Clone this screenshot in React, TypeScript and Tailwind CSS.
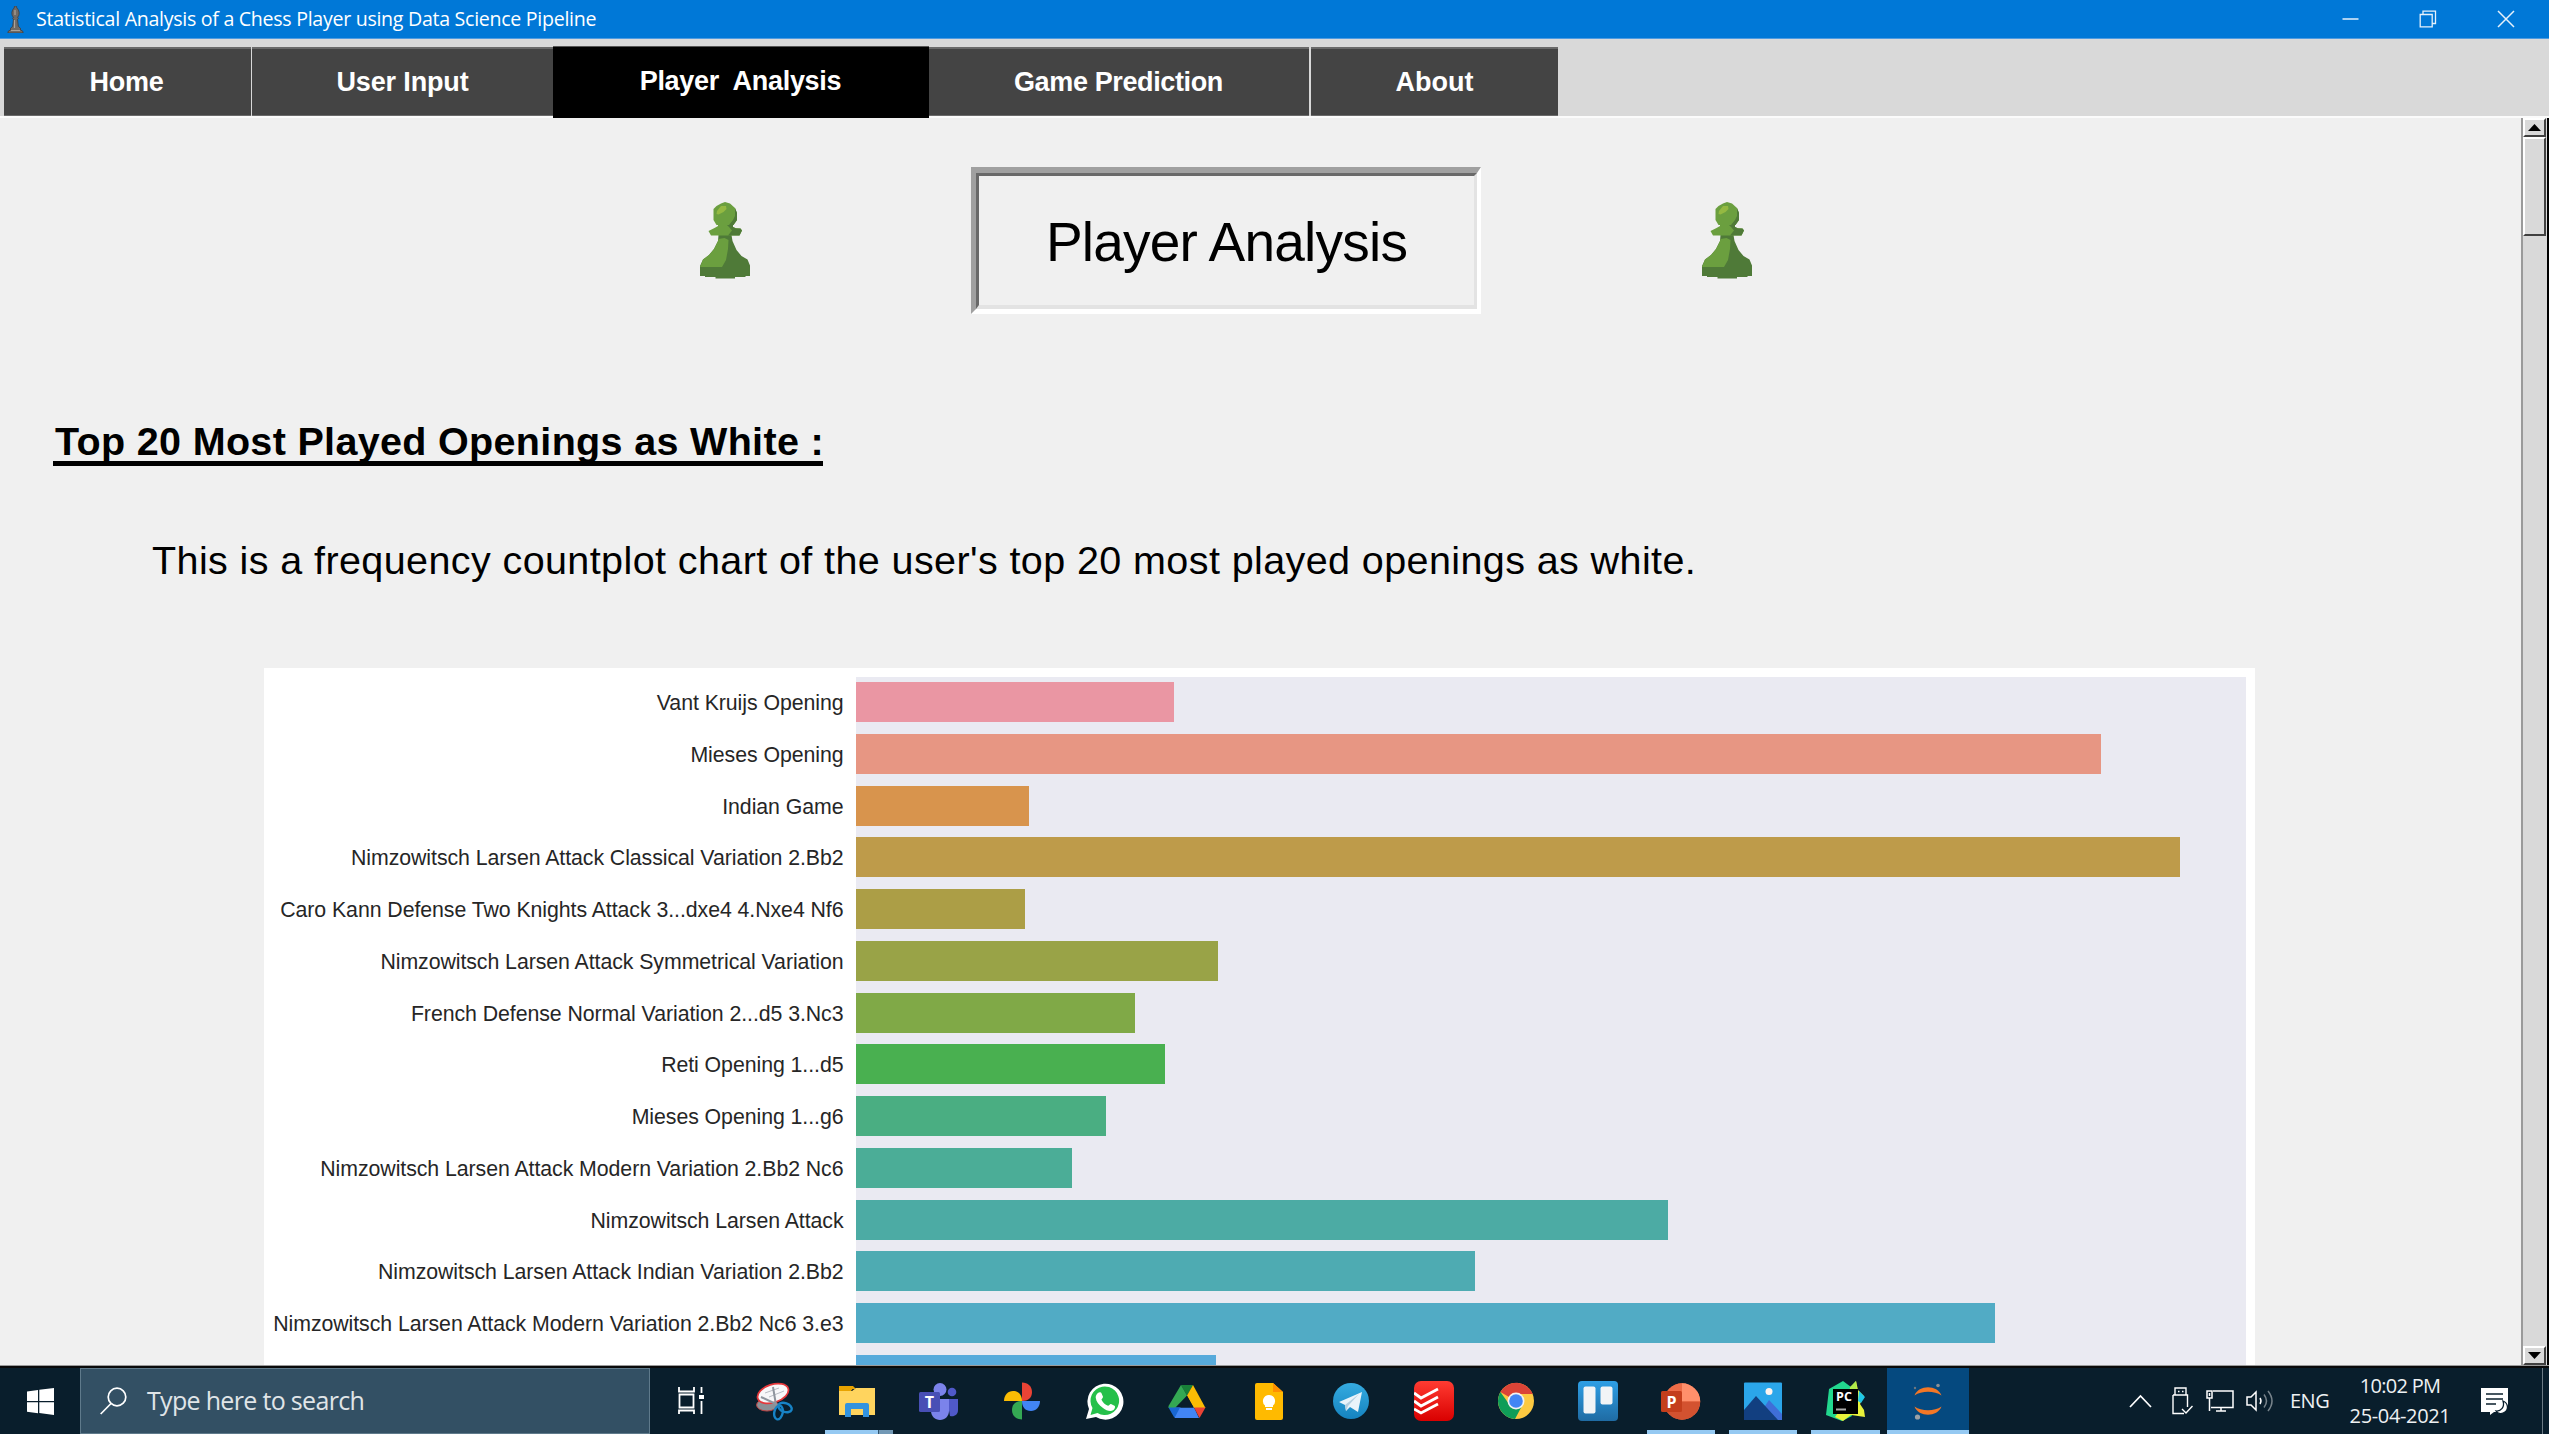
import { type ReactNode } from "react";

const ARIAL = "font-['Liberation_Sans',Arial,sans-serif]";
const UI = "font-['Open_Sans','Noto_Sans',sans-serif]";

const bars = [
  { label: "Vant Kruijs Opening", width: 318, color: "#ea96a3" },
  { label: "Mieses Opening", width: 1245, color: "#e79683" },
  { label: "Indian Game", width: 173, color: "#d8944d" },
  { label: "Nimzowitsch Larsen Attack Classical Variation 2.Bb2", width: 1324, color: "#be9b4a" },
  { label: "Caro Kann Defense Two Knights Attack 3...dxe4 4.Nxe4 Nf6", width: 169, color: "#ac9e46" },
  { label: "Nimzowitsch Larsen Attack Symmetrical Variation", width: 362, color: "#99a347" },
  { label: "French Defense Normal Variation 2...d5 3.Nc3", width: 279, color: "#80a947" },
  { label: "Reti Opening 1...d5", width: 309, color: "#49b050" },
  { label: "Mieses Opening 1...g6", width: 250, color: "#4aae82" },
  { label: "Nimzowitsch Larsen Attack Modern Variation 2.Bb2 Nc6", width: 216, color: "#4bad97" },
  { label: "Nimzowitsch Larsen Attack", width: 812, color: "#4caba4" },
  { label: "Nimzowitsch Larsen Attack Indian Variation 2.Bb2", width: 619, color: "#4eabb2" },
  { label: "Nimzowitsch Larsen Attack Modern Variation 2.Bb2 Nc6 3.e3", width: 1139, color: "#51abc5" },
  { label: "", width: 360, color: "#57aadb" },
];

function Bishop() {
  return (
    <svg className="h-[27px] w-[19px]" viewBox="0 0 19 27">
      <path d="M9.500 0c1 0 1.500.8 1.200 1.800C12.500 3.500 13.500 6 13 8.500c-.3 1.500-1 2.200-1.500 2.800l1 1-1 1 .8 7 2.200 2v1.500l2.500 1.700V27H2v-1.500L4.500 23.800v-1.500l2.200-2 .8-7-1-1 1-1C7 10.700 6.300 10 6 8.500 5.500 6 6.500 3.500 8.300 1.800 8 .8 8.500 0 9.500 0Z" fill="#6e6a66" stroke="#3d3a3a" strokeWidth=".8" />
      <path d="M9 4v5M8.500 14v8M5 24.500h9" stroke="#aaa39b" strokeWidth="1.200" />
    </svg>
  );
}

function Pawn() {
  return (
    <svg className="h-[77px] w-[51px]" viewBox="0 0 51 77">
      <path d="M18.500 33h13l1 6 4 9 5 6 6 3.500 2.500 6V74h-4.500v1H35v1.500H15.500V75H5v-1H0V64l3-6.500L9 53l5-6 4-8Z" fill="#4f7a38" />
      <path d="M18.500 37l6-1 4 2-.5 9-2 11-4 7H0l3-7.500L9 53l5-6 4-8Z" fill="#6b9f3f" />
      <path d="M21 1.500l4-1.500 5 1.500 5 4.500 2 5v7l-3.500 5h-17L13.500 18V7l3-3Z" fill="#6b9f3f" />
      <path d="M18 22h14v2.500l3.500 1.500 5 .5 1.500 2-2.500 5H11l-2.500-4.500 6-3 3.500-2Z" fill="#6b9f3f" />
      <path d="M35 6l2 5v7l-3.500 5h-4.500l4-5 2-4Z" fill="#4f7a38" />
      <path d="M27 23h6v2l3 1.500h4.500l1.500 2-2.500 5H28l4-5-3-3.500Z" fill="#4f7a38" />
      <path d="M17 9l4-5h5l.5 3-3 3-5 2.500-2-.5Z" fill="#94b942" />
    </svg>
  );
}

function TitleBar() {
  return (
    <div className="flex h-[39px] shrink-0 items-center border-b border-[#4f9be0] bg-[#0078d7] pl-[6px]">
      <Bishop />
      <span className={`ml-[11px] text-[19.600px] leading-[38px] tracking-[-0.290px] whitespace-nowrap text-white ${UI}`}>
        Statistical Analysis of a Chess Player using Data Science Pipeline
      </span>
      <div className="ml-auto flex h-full items-center pr-[34px]">
        <svg className="h-[18px] w-[17px]" viewBox="0 0 17 18"><path d="M.5 9h16" stroke="#e6f1fb" strokeWidth="1.500" /></svg>
        <svg className="ml-[60px] h-[18px] w-[18px]" viewBox="0 0 18 18" fill="none" stroke="#e6f1fb" strokeWidth="1.300"><path d="M1.200 4.500h12v12.300h-12ZM4 4.300V1.200h12.500v12.300h-3.200" /></svg>
        <svg className="ml-[60px] h-[18px] w-[18px]" viewBox="0 0 18 18"><path d="M1 1l16 16M17 1L1 17" stroke="#e6f1fb" strokeWidth="1.500" /></svg>
      </div>
    </div>
  );
}

const tab = `flex items-center justify-center whitespace-pre text-[27px] font-bold text-white ${ARIAL}`;
const idle = "h-[69px] border-t-2 border-b border-[#6a6a6a] bg-[#444444]";

function Tabs() {
  return (
    <div className="flex h-[79px] shrink-0 items-end border-b-2 border-[#fbfbfb] bg-[#d9d9d9] pl-[4px]">
      <div className={`${tab} ${idle} w-[247px] pr-[2px] tracking-[-0.250px]`}>Home</div>
      <div className={`${tab} ${idle} ml-px w-[301px] tracking-[-0.150px]`}>User Input</div>
      <div className={`${tab} relative -mb-[2px] h-[72px] w-[376px] border-t border-[#555555] bg-black pr-px pb-[3px] tracking-[-0.280px]`}>Player  Analysis</div>
      <div className={`${tab} ${idle} w-[380px] pr-px tracking-[-0.370px]`}>Game Prediction</div>
      <div className={`${tab} ${idle} ml-[2px] w-[247px]`}>About</div>
    </div>
  );
}

function ScrollArrow({ down = false }: { down?: boolean }) {
  return (
    <div className="flex h-[19px] shrink-0 items-center justify-center border-2 border-t-white border-r-[#404040] border-b-[#404040] border-l-white bg-[#d9d9d9]">
      <svg className="h-[7px] w-[13px]" viewBox="0 0 13 7">
        <path d={down ? "M0 0h13L6.500 7Z" : "M0 7h13L6.500 0Z"} fill="#000" />
      </svg>
    </div>
  );
}

function Scrollbar() {
  return (
    <div className="flex w-[28px] shrink-0 flex-col border-r-2 border-l-2 border-r-black border-l-[#9a9a9a] bg-[#d9d9d9] pr-px">
      <ScrollArrow />
      <div className="h-[99px] border-2 border-t-white border-r-[#404040] border-b-[#404040] border-l-white" />
      <div className="flex-1" />
      <ScrollArrow down />
    </div>
  );
}

function Chart() {
  return (
    <div className="ml-[264px] flex h-[698px] w-[1991px] overflow-hidden bg-white pt-[9px] pr-[9px]">
      <div className="flex w-[592px] shrink-0 flex-col items-end pt-[5px] pr-[12.500px]">
        {bars.map((bar) => (
          <div key={bar.color} className={`flex h-[51.770px] shrink-0 items-start text-[21.300px] leading-[42px] tracking-[-0.060px] whitespace-nowrap text-[#262626] ${ARIAL}`}>
            {bar.label}
          </div>
        ))}
      </div>
      <div className="flex-1 bg-[#eaeaf2] pt-[5px]">
        {bars.map((bar) => (
          <div key={bar.color} className="h-[51.770px]">
            <div className="h-[40px]" style={{ width: bar.width, backgroundColor: bar.color }} />
          </div>
        ))}
      </div>
    </div>
  );
}

function Content() {
  return (
    <div className="flex min-h-0 flex-1 border-b border-[#9a9a9a] bg-[#f0f0f0]">
      <main className={`flex min-w-0 flex-1 flex-col text-black ${ARIAL}`}>
        <div className="flex h-[196px] shrink-0 items-start pt-[49px] pl-[700px]">
          <div className="mt-[35px]"><Pawn /></div>
          <div className="ml-[220px] h-[147px] w-[510px] border-t-[6px] border-r-[4px] border-b-[5px] border-l-[5px] border-t-[#a0a0a0] border-r-white border-b-white border-l-[#a0a0a0]">
            <h1 className="flex h-full items-center justify-center border-t-[3px] border-r-[3px] border-b-[4px] border-l-[3px] border-t-[#696969] border-r-[#e3e3e3] border-b-[#e3e3e3] border-l-[#696969] pt-[3px] text-[55px] leading-none tracking-[-0.780px] whitespace-nowrap">
              Player Analysis
            </h1>
          </div>
          <div className="mt-[35px] ml-[221px]"><Pawn /></div>
        </div>
        <h2 className="mt-[98px] ml-[53px] h-[54px] w-[770px] shrink-0 border-b-[5px] border-black pl-[2px] text-[39.500px] leading-[58px] font-bold tracking-[0.330px] whitespace-nowrap">
          Top 20 Most Played Openings as White :
        </h2>
        <p className="mt-[64px] ml-[152px] h-[138px] shrink-0 text-[39.500px] leading-[60px] tracking-[0.400px] whitespace-nowrap">
          This is a frequency countplot chart of the user's top 20 most played openings as white.
        </p>
        <Chart />
      </main>
      <Scrollbar />
    </div>
  );
}

function Icon({ children }: { children: ReactNode }) {
  return <svg className="h-[40px] w-[40px]" viewBox="0 0 40 40" fill="none">{children}</svg>;
}

const TaskView = (
  <Icon>
    <g stroke="#fff" strokeWidth="1.800">
      <path d="M7.500 13.500h14v13h-14ZM7 6v4.500h15V6M7 33v-3.500h15V33M29.500 6v6M29.500 20v13" />
    </g>
    <path d="M27 14h5v4h-5Z" fill="#fff" />
  </Icon>
);
const Snip = (
  <Icon>
    <ellipse cx="12" cy="24" rx="10.500" ry="6" fill="#8c9096" stroke="#b94040" />
    <ellipse cx="18" cy="12.500" rx="16" ry="9" transform="rotate(-18 18 12.500)" fill="#f7f7f9" stroke="#e5383b" strokeWidth="1.800" />
    <path d="M10 12l14-5M14 16l15-6" stroke="#b8bcc4" strokeWidth="1" />
    <path d="M6 16l17 8M18 6l3 18" stroke="#8f959e" strokeWidth="2" />
    <g stroke="#1783c6" strokeWidth="2.400">
      <ellipse cx="30" cy="26.500" rx="7" ry="4.300" transform="rotate(20 30 26.500)" />
      <ellipse cx="23.500" cy="31.500" rx="4.200" ry="7" transform="rotate(12 23.500 31.500)" />
    </g>
  </Icon>
);
const Folder = (
  <Icon>
    <path d="M2 5h14l3 3H2Z" fill="#e8a300" />
    <path d="M2 10h13l4-3h19v27H2Z" fill="#ffd45e" />
    <path d="M2 7h11l4-1-3 4H2Z" fill="#e8a300" />
    <path d="M8 36V24q0-2 2-2h20q2 0 2 2v12h-6v-8H14v8Z" fill="#3393df" />
  </Icon>
);
const Teams = (
  <Icon>
    <circle cx="33" cy="11" r="4.300" fill="#5059c9" />
    <path d="M28 18h11v11c0 5-4 7-8 6Z" fill="#5059c9" />
    <circle cx="21" cy="8.500" r="6.500" fill="#7b83eb" />
    <path d="M12 18h18v12c0 5-4 9-9 9s-9-4-9-9Z" fill="#7b83eb" />
    <rect y="11" width="21" height="20" rx="1.500" fill="#484fb5" />
    <text x="10.300" y="27" textAnchor="middle" fontSize="16" fontWeight="700" fontFamily="Open Sans" fill="#fff">T</text>
  </Icon>
);
const GooglePhotos = (
  <Icon>
    <path d="M20 1.500c6 0 10 4 10 9.500 0 6-4 9-10 9Z" fill="#ea4335" />
    <path d="M20 20H2c0-6 4-10 9-10 6 0 9 4 9 10Z" fill="#fbbc04" />
    <path d="M20 20h18c0 6-4 10-9 10-6 0-9-4-9-10Z" fill="#4285f4" />
    <path d="M20 20v18.500c-6 0-10-4-10-9.500 0-6 4-9 10-9Z" fill="#34a853" />
  </Icon>
);
const WhatsApp = (
  <Icon>
    <path d="M2 38l3-10A18 18 0 1 1 12 36Z" fill="#fff" />
    <path d="M6.500 34l2-7A14.300 14.300 0 1 1 13.500 32Z" fill="#25c04a" />
    <path d="M14 12c1-1 3-1 3.500.3l1.500 3.500c.3 1-1.800 2.400-1.500 3 1.500 3 3.500 4.700 6.500 6 .7.300 2-2.200 3-1.800l3.500 1.800c1.200.7.300 3.300-1 4.200-3 2-7 .6-10.500-2-4-3-7-6.500-7.300-10.500 0-2 1-3.500 2.300-4.500Z" fill="#fff" />
  </Icon>
);
const Drive = (
  <Icon>
    <path d="M14 4h12l-6 10.500Z" fill="#188038" />
    <path d="M14 4l6 10.500L8 27H1.500V25Z" fill="#34a853" />
    <path d="M26 4l12.500 23H27L20 14.500Z" fill="#fbbc04" />
    <path d="M8 26.500h19L32 37H8Z" fill="#4285f4" />
    <path d="M1.500 26.500H13L7.500 37Z" fill="#1967d2" />
    <path d="M27 26.500h11.500L32.500 37Z" fill="#ea4335" />
    <path d="M20 15l6.500 11.500h-13Z" fill="#091e2c" />
  </Icon>
);
const Keep = (
  <Icon>
    <path d="M8 2h16l10 9v26q0 2-2 2H8q-2 0-2-2V4q0-2 2-2Z" fill="#ffba00" />
    <path d="M24 2l10 9H24Z" fill="#ff9000" />
    <path d="M20 14a6 6 0 0 1 4 10.500V26h-8v-1.500A6 6 0 0 1 20 14ZM17 27h6v2h-6Z" fill="#fff" />
  </Icon>
);
const Telegram = (
  <Icon>
    <defs><linearGradient id="telegram" x2="0" y2="1"><stop stopColor="#35abe0" /><stop offset="1" stopColor="#1583c0" /></linearGradient></defs>
    <circle cx="20" cy="20" r="18" fill="url(#telegram)" />
    <path d="M8 21L31 11l-4 20-8-5-4 4-1-6Z" fill="#e9f3fa" />
    <path d="M14 24l14-11-11 12-2 5Z" fill="#b5cfe0" />
  </Icon>
);
const Todoist = (
  <Icon>
    <defs><linearGradient id="todoist" x2="0" y2="1"><stop stopColor="#ff3c32" /><stop offset="1" stopColor="#d90000" /></linearGradient></defs>
    <rect width="40" height="40" rx="7" fill="url(#todoist)" />
    <path d="M0 12l7 5L24 8M0 20l7 5 17-9M0 28l7 4 17-9" stroke="#fff" strokeWidth="2.800" />
  </Icon>
);
const Chrome = (
  <Icon>
    <circle cx="20" cy="20" r="18" fill="#fdc941" />
    <path d="M20 20L4.400 11A18 18 0 0 1 36.800 13H20Z" fill="#db4437" />
    <path d="M20 20l7 3-8 15A18 18 0 0 1 4.400 11L13 23Z" fill="#0f9d58" />
    <circle cx="20" cy="20" r="8.500" fill="#f1f1f1" />
    <circle cx="20" cy="20" r="6.800" fill="#4285f4" />
  </Icon>
);
const Trello = (
  <Icon>
    <defs><linearGradient id="trello" x2="0" y2="1"><stop stopColor="#2e9fe6" /><stop offset="1" stopColor="#1f6ba3" /></linearGradient></defs>
    <rect width="40" height="40" rx="4" fill="url(#trello)" />
    <rect x="5.500" y="5.500" width="12" height="27" rx="2" fill="#f2f4f6" />
    <rect x="22.500" y="5.500" width="12" height="18" rx="2" fill="#f2f4f6" />
  </Icon>
);
const PowerPoint = (
  <Icon>
    <circle cx="21" cy="20.500" r="18.200" fill="#ed6c47" />
    <path d="M21 2.300A18.200 18.200 0 0 1 39.200 20.500H21Z" fill="#ff8f6b" />
    <path d="M3 20.500h36.200a18.200 18.200 0 0 1-36.400 0Z" fill="#d35230" />
    <path d="M3 20.500A18.200 18.200 0 0 1 21 2.300v18.200Z" fill="#ed6c47" />
    <rect x="0" y="10" width="21" height="21" rx="1.500" fill="#c43e1c" />
    <text x="10.500" y="26.500" textAnchor="middle" fontSize="16" fontWeight="700" fontFamily="Open Sans" fill="#fff">P</text>
  </Icon>
);
const PhotosApp = (
  <Icon>
    <rect x="1" y="1.500" width="38" height="37.500" rx="1" fill="#2ba6ea" />
    <path d="M22 25l4-6 13 14v6H22Z" fill="#3f6ed8" />
    <path d="M1 29l12-14 22 24H1Z" fill="#123f80" />
    <circle cx="26" cy="10.500" r="3.500" fill="#fff4ef" />
  </Icon>
);
const PyCharm = (
  <Icon>
    <path d="M3 8L17 0l8 6-2 20 3 9-10 5L0 34Z" fill="#22d88f" />
    <path d="M24 7l6-7 2 9 6 6-4 8 4 6 1 7-14-2-8 6-8-4 10-14Z" fill="#e9f23a" />
    <path d="M24 6l6-6 1 9-5 3Z" fill="#aeea4b" />
    <path d="M33 10l6 6-4 6-3-2Z" fill="#1fc8e8" />
    <path d="M7 8h25v25H7Z" fill="#000" />
    <text x="18" y="20" textAnchor="middle" fontSize="12.500" fontWeight="700" fontFamily="Open Sans" fill="#fff">PC</text>
    <path d="M10 28.500h10" stroke="#aaa" strokeWidth="2" />
  </Icon>
);
const Jupyter = (
  <Icon>
    <path d="M6.500 14.500c4-11 23-11 27 0-7-5-20-5-27 0ZM6.500 25.500c4 11 23 11 27 0-7 5-20 5-27 0Z" fill="#f37726" />
    <circle cx="30" cy="4.500" r="1.800" fill="#8a8f94" />
    <circle cx="9.500" cy="36" r="2.600" fill="#9aa0a5" />
    <circle cx="7" cy="7" r="1.200" fill="#6f7780" />
  </Icon>
);

const apps: { icon: ReactNode; open?: boolean; active?: boolean; multi?: boolean }[] = [
  { icon: TaskView },
  { icon: Snip },
  { icon: Folder, open: true, multi: true },
  { icon: Teams },
  { icon: GooglePhotos },
  { icon: WhatsApp },
  { icon: Drive },
  { icon: Keep },
  { icon: Telegram },
  { icon: Todoist },
  { icon: Chrome },
  { icon: Trello },
  { icon: PowerPoint, open: true },
  { icon: PhotosApp, open: true },
  { icon: PyCharm, open: true },
  { icon: Jupyter, open: true, active: true },
];

function Tray() {
  return (
    <div className={`ml-auto flex h-full items-center text-[20px] text-[#eef1f3] ${UI}`}>
      <svg className="h-[14px] w-[23px]" viewBox="0 0 23 14" fill="none"><path d="M1 13L11.500 2 22 13" stroke="#fff" strokeWidth="1.700" /></svg>
      <svg className="ml-[20px] h-[28px] w-[21px]" viewBox="0 0 21 28" fill="none" stroke="#fff" strokeWidth="1.400">
        <path d="M3 8V1h11v7M1 8h14.500v12M1 8v18.500h11M6 4.500h1.500M10 4.500h1.500M10 22l4 4 6.500-7" />
      </svg>
      <svg className="ml-[13px] h-[24px] w-[28px]" viewBox="0 0 28 24" fill="none" stroke="#fff" strokeWidth="1.500">
        <path d="M7 2h20v16.500H5M1 2h5v7H1ZM3.500 9v13M3.500 4v3M15 18.500V22M10 22h10" />
      </svg>
      <svg className="ml-[12px] h-[26px] w-[28px]" viewBox="0 0 28 26" fill="none" stroke="#fff" strokeWidth="1.500">
        <path d="M1 9h4l5-5v18l-5-5H1Z" />
        <path d="M14 10q2 3 0 6" />
        <path d="M18 6.500q5 6.500 0 13M22 3q8 10 0 20" opacity=".45" />
      </svg>
      <span className="ml-[16px] w-[39px] leading-[66px] tracking-[-0.500px]">ENG</span>
      <div className="ml-[21px] flex w-[100px] flex-col items-center leading-[30.500px] whitespace-nowrap">
        <span className="tracking-[-0.700px]">10:02 PM</span>
        <span className="tracking-[-0.350px]">25-04-2021</span>
      </div>
      <svg className="ml-[31px] h-[28px] w-[28px]" viewBox="0 0 28 28">
        <path d="M0 1h27v17.500L21 25h-8l-4 3v-3H0Z" fill="#fff" />
        <path d="M5 7h17M5 12h17M5 17h10" stroke="#0a1f2d" strokeWidth="1.500" />
        <path d="M22 14c5 2 6 8 2 11-3 2.500-7 2-9-1 5 .5 9-4 7-10Z" fill="#fff" stroke="#0a1f2d" strokeWidth="1.300" />
      </svg>
      <div className="ml-[33px] h-full w-[7px] border-l border-[#6c7b85]" />
    </div>
  );
}

function Taskbar() {
  return (
    <div className="flex h-[68px] shrink-0 items-stretch border-t-2 border-[#0a0a0a] bg-[#091e2c]">
      <div className="flex w-[80px] items-center justify-center">
        <svg className="h-[27px] w-[27px]" viewBox="0 0 27 27" fill="#fff"><path d="M0 3.500L11 2v11H0ZM12.300 1.800L27 0v13H12.300ZM0 14.300h11V25.300L0 23.800ZM12.300 14.300H27V27l-14.700-1.900Z" /></svg>
      </div>
      <div className="mr-px flex w-[570px] items-center border border-[#5f7a8b] bg-[#335064] pl-[19px]">
        <svg className="h-[28px] w-[27px]" viewBox="0 0 27 28" fill="none" stroke="#fff" strokeWidth="1.700"><circle cx="17" cy="10" r="8.800" /><path d="M11 16.500L.7 27" /></svg>
        <span className={`ml-[20px] text-[25px] tracking-[-0.680px] whitespace-nowrap text-[#e0e5e8] ${UI}`}>Type here to search</span>
      </div>
      {apps.map((app, i) => (
        <div key={i} className={`relative flex w-[82.400px] shrink-0 items-center justify-center ${app.active ? "bg-[#05497f]" : ""}`}>
          {app.icon}
          {app.open && (
            <div className={`absolute bottom-0 flex h-[4px] bg-[#95c9f2] ${app.active ? "inset-x-0" : app.multi ? "right-[5px] left-[9px]" : "inset-x-[7px]"}`}>
              {app.multi && <div className="ml-auto w-[15px] border-l border-[#30536d] bg-[#7298b5]" />}
            </div>
          )}
        </div>
      ))}
      <Tray />
    </div>
  );
}

export default function App() {
  return (
    <div className="flex h-[1434px] w-[2549px] flex-col overflow-hidden">
      <TitleBar />
      <Tabs />
      <Content />
      <Taskbar />
    </div>
  );
}
